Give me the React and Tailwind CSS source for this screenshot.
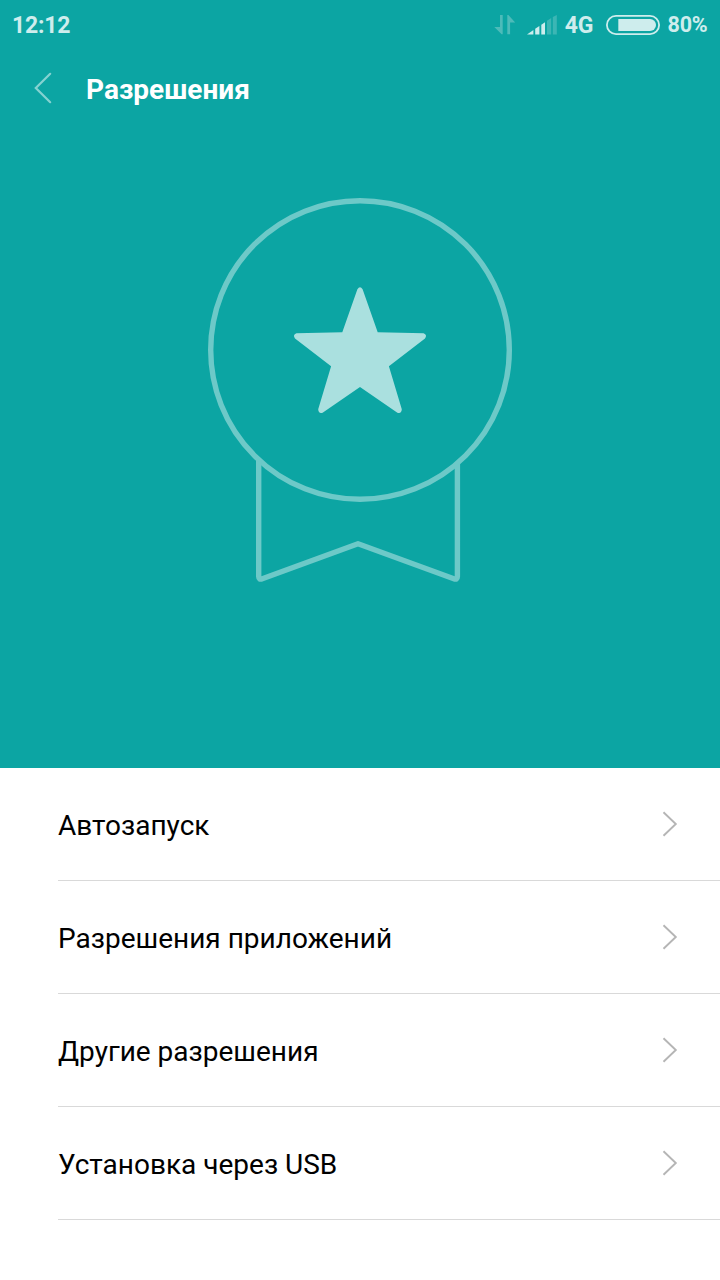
import React from "react";

const items = [
  { id: "autostart", label: "Автозапуск" },
  { id: "apps", label: "Разрешения приложений" },
  { id: "other", label: "Другие разрешения" },
  { id: "usb", label: "Установка через USB" },
];

const StatusBar = () => (
  <div className="flex h-[50px] items-center justify-between pl-3 pr-[12.5px] text-[23px] font-bold leading-none text-[#ceeded]">
    <span className="pt-px tracking-[-0.2px]">12:12</span>
    <div className="flex items-center">
      {/* Передача данных */}
      <svg className="mr-[10.5px] h-5 w-[22px]" viewBox="0 0 22 20" fill="#4dbbb9">
        <path d="M6 0h2.7v19.3H7.6L0.3 12H6z" />
        <path d="M13.3 0h1.1l6.8 7.4h-5.1v11.9h-2.8z" />
      </svg>
      {/* Уровень сигнала */}
      <svg className="mr-2 h-5 w-[30px]" viewBox="0 0 30 20" fill="#ceeded">
        <path d="M0 19.4L6.4 15v4.4z" />
        <path d="M8.2 13.8l4.2-2.8v8.4H8.2z" />
        <path d="M14.3 9.8L18 7.2v12.2h-3.7z" />
        <path d="M20 5.8l4.2-2.8v16.4H20zM25.8 1.9L29.8 0v19.4h-4z" fill="#3cb6b4" />
      </svg>
      <span className="pt-px tracking-[-0.3px]">4G</span>
      <svg className="ml-[13px] mr-[7.5px] h-5 w-[54px]" viewBox="0 0 54 20">
        <rect x="0.9" y="0.9" width="52.2" height="18.2" rx="9.1" fill="none" stroke="#ceeded" strokeWidth="1.8" />
        <path d="M12.3 4H44a6 6 0 0 1 0 12H12.3z" fill="#ceeded" />
      </svg>
      <span className="text-[21.5px] tracking-[-0.2px]">80%</span>
    </div>
  </div>
);

const Medal = () => (
  <svg className="h-[388px] w-[308px]" viewBox="206 196 308 388">
    <g fill="none" stroke="#6dc9c8" strokeWidth="5.4" strokeLinejoin="round">
      <circle cx="360" cy="350" r="149.3" />
      <path d="M258.7 460V576.5Q258.7 580.2 262.3 578.7L358 543.8L453.8 578.7Q457.4 580.2 457.4 576.5V463" />
    </g>
    <path
      fill="#aae0df"
      d="M357.4 289.3Q360 285.4 362.6 289.3L377.7 332.2L423.6 333.3Q427.6 334.8 425 338.4L388.9 366.2L401.8 409.3Q401.4 414.2 397.4 412.7L360 387L322.6 412.7Q318.6 414.2 318.2 409.3L331.1 366.2L295 338.4Q292.4 334.8 296.4 333.3L342.3 332.2Z"
    />
  </svg>
);

const PermissionRow = ({ label }) => (
  <li className="flex h-[113px] items-center justify-between border-b border-[#d9d9d9] pr-[42px]">
    <span className="pt-1 text-[28px] leading-8 text-black">{label}</span>
    <svg className="h-[26px] w-4" viewBox="0 0 16 26" fill="none" stroke="#b5b5b5" strokeWidth="1.9">
      <path d="M1.5 1.2L13.8 13L1.5 24.8" />
    </svg>
  </li>
);

const App = () => {
  return (
    <div className="flex h-[1280px] w-[720px] flex-col overflow-hidden bg-white font-['Roboto',sans-serif]">
      <section className="flex h-[768px] flex-col bg-[#0ca5a3]">
        <StatusBar />
        <header className="flex h-[78px] items-center pl-[34px]">
          <button type="button" aria-label="Назад" className="mr-[34px] pb-0.5">
            <svg className="h-8 w-[18px]" viewBox="0 0 18 32" fill="none" stroke="#85d2d1" strokeWidth="2.2" strokeLinecap="round">
              <path d="M16.2 1.8L1.8 16L16.2 30.2" />
            </svg>
          </button>
          <h1 className="pt-0.5 text-[28px] font-bold leading-8 text-white">Разрешения</h1>
        </header>
        <div className="flex justify-center pt-[68px]">
          <Medal />
        </div>
      </section>

      <ul className="pl-[58px]">
        {items.map((item) => (
          <PermissionRow key={item.id} label={item.label} />
        ))}
      </ul>
    </div>
  );
};

export default App;
